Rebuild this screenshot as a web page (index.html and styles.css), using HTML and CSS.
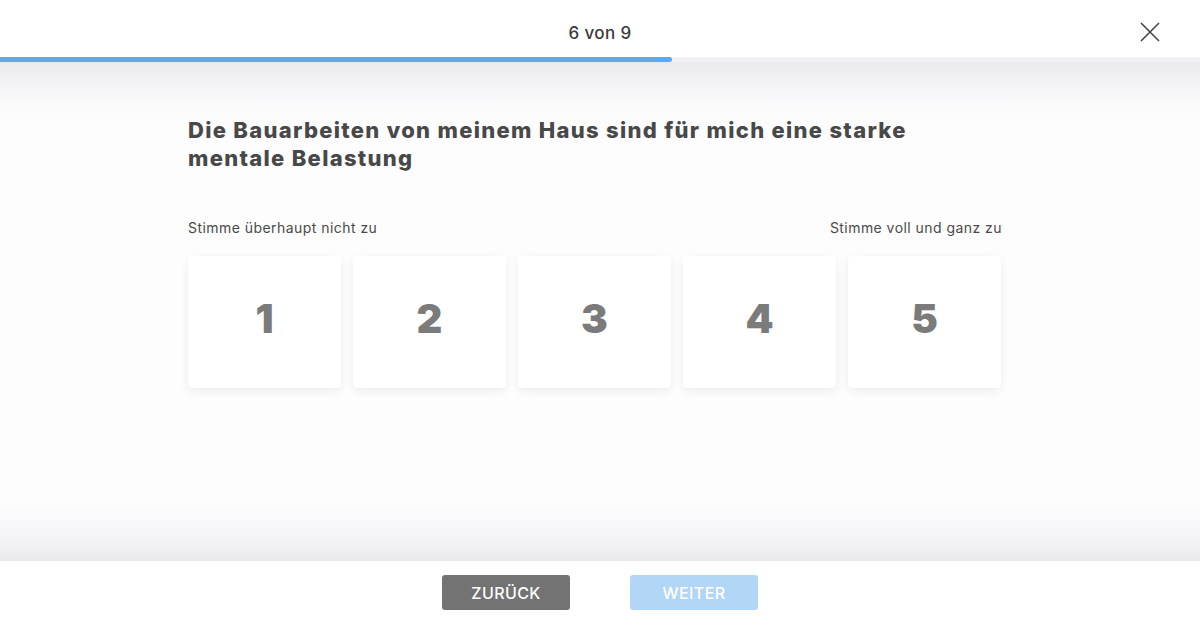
FILE: index.html
```html
<!DOCTYPE html>
<html lang="de">
<head>
<meta charset="utf-8">
<title>Umfrage</title>
<link rel="stylesheet" href="styles.css">
</head>
<body>
<div class="page">
  <header class="header">
    <div class="header-row">
      <div class="counter">6 von 9</div>
      <button class="close" aria-label="Schließen">
        <svg width="22" height="22" viewBox="0 0 22 22"><path d="M2 2 L20 20 M20 2 L2 20" stroke="#444" stroke-width="1.6" fill="none"/></svg>
      </button>
    </div>
    <div class="track"><div class="bar" style="width:672px"></div></div>
  </header>
  <main class="main">
    <div class="content">
      <h1 class="question">Die Bauarbeiten von meinem Haus sind für mich eine starke mentale Belastung</h1>
      <div class="labels">
        <span>Stimme überhaupt nicht zu</span>
        <span>Stimme voll und ganz zu</span>
      </div>
      <div class="scale">
        <div class="card">1</div>
        <div class="card">2</div>
        <div class="card">3</div>
        <div class="card">4</div>
        <div class="card">5</div>
      </div>
    </div>
  </main>
  <footer class="footer">
    <button class="btn btn-back">ZURÜCK</button>
    <button class="btn btn-next">WEITER</button>
  </footer>
</div>
</body>
</html>
```
FILE: styles.css
```css
html, body {
  margin: 0;
  padding: 0;
  background: #fff;
  font-family: Inter, "Noto Sans", "Liberation Sans", sans-serif;
}
.page {
  width: 1200px;
  height: 618px;
  display: flex;
  flex-direction: column;
  overflow: hidden;
}
.header {
  height: 62px;
  display: flex;
  flex-direction: column;
  background: #fff;
}
.header-row {
  height: 57px;
  display: flex;
  align-items: center;
  justify-content: center;
  position: relative;
}
.counter {
  font-size: 17px;
  font-weight: 500;
  color: #3a3a3a;
  letter-spacing: 0.4px;
  margin-top: 8px;
}
.close {
  position: absolute;
  right: 39px;
  top: 21px;
  width: 22px;
  height: 22px;
  padding: 0;
  border: 0;
  background: none;
  display: flex;
}
.track {
  height: 5px;
  background: #f1f1f3;
}
.bar {
  height: 5px;
  background: #5aaaef;
  border-radius: 0 3px 3px 0;
}
.main {
  height: 499px;
  background: linear-gradient(to bottom, #e9e9ed 0px, #f3f3f6 20px, #fafafb 40px, #fdfdfe 60px, #fdfdfe 440px, #f5f5f7 475px, #e9e9ed 499px);
}
.content {
  padding: 54px 0 0 188px;
  width: 814px;
}
.question {
  margin: 0;
  font-size: 22px;
  line-height: 28px;
  font-weight: 800;
  color: #484848;
  letter-spacing: 1.3px;
  width: 780px;
}
.labels {
  margin-top: 47px;
  display: flex;
  justify-content: space-between;
  font-size: 14px;
  color: #4a4a4a;
  line-height: 18px;
  letter-spacing: 0.45px;
}
.scale {
  margin-top: 19px;
  display: flex;
  gap: 12px;
}
.card {
  width: 153px;
  height: 132px;
  box-sizing: border-box;
  padding-bottom: 8px;
  background: #fff;
  border-radius: 4px;
  box-shadow: 0 3px 10px rgba(0,0,0,0.07);
  display: flex;
  align-items: center;
  justify-content: center;
  font-size: 40px;
  font-weight: 900;
  color: #7b7b7b;
}
.footer {
  flex: 1;
  background: #fff;
  display: flex;
  justify-content: center;
  gap: 60px;
  padding-top: 14px;
}
.btn {
  width: 128px;
  height: 35px;
  border: 0;
  border-radius: 3px;
  font-family: inherit;
  font-size: 16px;
  font-weight: 500;
  color: #fff;
  letter-spacing: 0.4px;
}
.btn-back {
  background: #737373;
}
.btn-next {
  background: #b1d6f6;
}
```
